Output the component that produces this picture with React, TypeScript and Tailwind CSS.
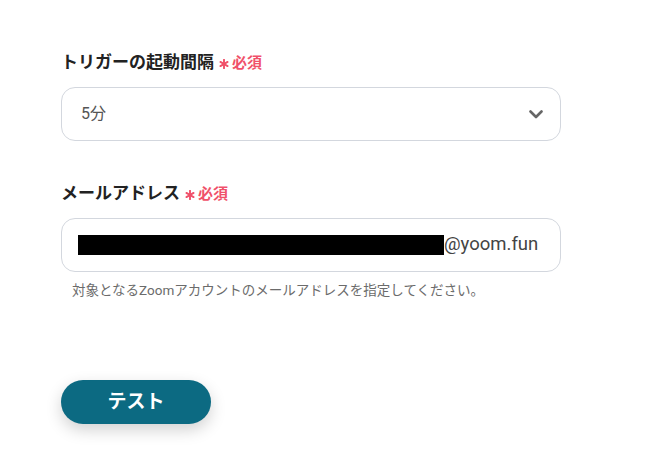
const jp = "font-['Roboto','Noto_Sans_CJK_JP',sans-serif]";

function Required() {
  return (
    <span className="ml-[5px] flex items-center text-[#f0516a]">
      <svg width="10" height="10" viewBox="0 0 10 10" className="mt-[2px]">
        <g stroke="#f0516a" strokeWidth="1.9" strokeLinecap="round">
          <path d="M5 0.8 V9.2" />
          <path d="M1.4 2.9 L8.6 7.1" />
          <path d="M1.4 7.1 L8.6 2.9" />
        </g>
      </svg>
      <span className="ml-[3px] text-[15px] font-bold">必須</span>
    </span>
  );
}

function Label({ text }: { text: string }) {
  return (
    <div className="flex h-[22px] items-center">
      <span className="text-[17px] font-bold text-[#222]">{text}</span>
      <Required />
    </div>
  );
}

export default function App() {
  return (
    <div className={`${jp} h-[473px] w-[646px] bg-white pl-[61px] pt-[52px]`}>
      <div className="w-[500px]">
        <Label text="トリガーの起動間隔" />
        <div className="mt-[13px] flex h-[54px] items-center justify-between rounded-[14px] border border-[#d3d7de] pl-[19px] pr-[17px]">
          <span className="text-[16px] text-[#555]">5分</span>
          <svg width="14" height="9" viewBox="0 0 14 9" fill="none">
            <path d="M1.5 1.5 L7 7 L12.5 1.5" stroke="#666" strokeWidth="2.6" strokeLinecap="round" strokeLinejoin="round" />
          </svg>
        </div>

        <div className="mt-[42px]">
          <Label text="メールアドレス" />
        </div>
        <div className="mt-[13px] flex h-[54px] items-center rounded-[14px] border border-[#d3d7de] pl-[16px]">
          <span className="h-[20px] w-[366px] bg-black" />
          <span className="text-[18.5px] text-[#444]">@yoom.fun</span>
        </div>
        <p className="mt-[8px] pl-[11px] text-[13.5px] text-[#6b6b6b]">
          対象となるZoomアカウントのメールアドレスを指定してください。
        </p>

        <button className="mt-[80px] flex h-[44px] w-[150px] items-center justify-center rounded-full bg-[#0c6a82] text-[19px] font-bold text-white shadow-[0_6px_16px_rgba(0,0,0,0.18)]">
          テスト
        </button>
      </div>
    </div>
  );
}
